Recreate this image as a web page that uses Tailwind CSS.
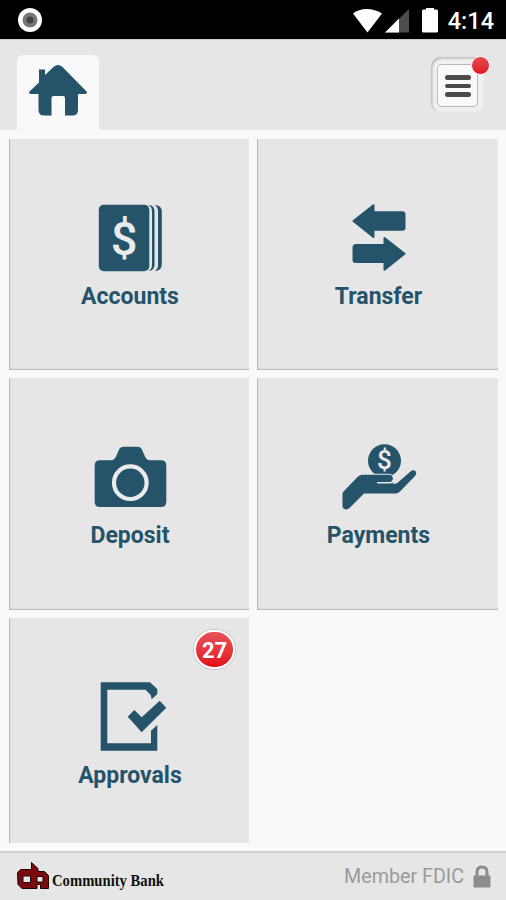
<!DOCTYPE html>
<html lang="en">
<head>
    <meta charset="UTF-8">
    <meta name="viewport" content="width=device-width, initial-scale=1.0">
    <title>Community Bank</title>
    <script src="https://cdn.jsdelivr.net/npm/@tailwindcss/browser@4"></script>
</head>
<body class="w-[506px] h-[900px] overflow-hidden flex flex-col bg-[#f9f9f9] font-['Roboto',sans-serif]">
    <!-- Status bar -->
    <div class="h-[39px] shrink-0 bg-black flex items-center justify-between pl-[17px] pr-3">
        <svg class="w-[26px] h-[26px]" viewBox="0 0 26 26">
            <circle cx="13" cy="13" r="12" fill="#fff" />
            <circle cx="13" cy="13" r="7.5" fill="#777" />
            <circle cx="13" cy="13" r="3.5" fill="#444" />
        </svg>
        <div class="flex items-center">
            <svg class="w-[88px] h-[26px]" viewBox="0 0 88 26">
                <path d="M1 6.500C8 .5 21 .5 30 6.500L15.500 25.500Z" fill="#fff" />
                <path d="M33 25.500L57 2V25.500Z" fill="#4d4d4d" />
                <path d="M33 25.500L47 11.500V25.500Z" fill="#fff" />
                <path d="M70 4Q70 2.500 71.500 2.500H74V1H82V2.500H84.500Q86 2.500 86 4V24Q86 25.500 84.500 25.500H71.500Q70 25.500 70 24Z" fill="#fff" />
            </svg>
            <span class="ml-[8px] mt-[3px] text-white font-medium text-[23.500px] leading-6">4:14</span>
        </div>
    </div>

    <!-- Header -->
    <header class="h-[91px] shrink-0 border-t border-[#ccc] bg-[#e6e6e6] flex justify-between items-start pl-[17px] pr-[21px]">
        <div class="w-[82px] h-[75px] mt-[15px] rounded-t-md bg-[#f9f9f9] flex justify-center">
            <svg class="w-[60px] h-[54px] mt-[9px]" viewBox="0 0 60 54" fill="#25536a">
                <path d="M11 5.500H17V11L26 2.500Q30 -.5 34 2.500L58.500 27.500Q60 29.500 57 30H50V46Q50 51.500 44.500 51.500H37V34Q37 32 35 32H25.500Q23.500 32 23.500 34V51.500H16Q10.500 51.500 10.500 46V30H3Q0 29.500 1.500 27.500L11 18.500Z" />
            </svg>
        </div>
        <div class="relative mt-[17px] w-[54px] h-[56px] rounded-[10px] bg-[#f0f0f0] shadow-[inset_1px_1px_3px_#aaa] p-[7px] pl-[6px]">
            <div class="w-[41px] h-[43px] rounded bg-[#f9f9f9] border border-[#bbb] flex flex-col items-center justify-center gap-1 pt-px">
                <div class="w-[26px] h-[4.500px] rounded-full bg-[#4a4a4a]"></div>
                <div class="w-[26px] h-[4.500px] rounded-full bg-[#4a4a4a]"></div>
                <div class="w-[26px] h-[4.500px] rounded-full bg-[#4a4a4a]"></div>
            </div>
            <div class="absolute -top-px -right-[5px] w-[19px] h-[19px] rounded-full border border-[#f5f5f5] bg-linear-to-b from-[#ea4650] to-[#e01524]"></div>
        </div>
    </header>

    <!-- Menu tiles -->
    <main class="h-[721px] shrink-0 overflow-hidden pt-[9px] pl-[9px] pb-2">
        <div class="h-[704px] overflow-hidden grid grid-cols-[240px_241px] grid-rows-[231px_232px_225px] gap-2 text-[#25536a] text-[23px] font-bold leading-7">
            <a class="bg-[#e6e6e6] shadow-[inset_1px_-1px_1px_#b4b4b4] pt-[57px] flex flex-col items-center">
                <svg class="w-20 h-20" viewBox="0 0 80 80" fill="#25536a">
                    <rect x="9.800" y="8.700" width="50.500" height="66.500" rx="5" />
                    <path d="M59.500 8.900Q65.500 9.500 65.500 15V69Q65.500 74.500 59.500 75Q63 73 63 69V15Q63 11 59.500 8.900Z" />
                    <path d="M65.500 8.900Q72.800 9.500 72.800 15V69Q72.800 74.500 65.500 75Q69 73 69 69V15Q69 11 65.500 8.900Z" />
                    <text x="35" y="59" text-anchor="middle" font-size="47" font-weight="500" fill="#ebebeb">$</text>
                </svg>
                <span class="mt-[7px] pl-[2px]">Accounts</span>
            </a>
            <a class="bg-[#e6e6e6] shadow-[inset_1px_-1px_1px_#b4b4b4] pt-[57px] flex flex-col items-center">
                <svg class="w-20 h-20" viewBox="0 0 80 80" fill="#25536a" stroke="#25536a" stroke-width="2" stroke-linejoin="round">
                    <path d="M15.500 25L35.500 9.300V16.300H64Q66.500 16.300 66.500 18.500V31.500Q66.500 33.700 64 33.700H35.500V41Z" />
                    <path d="M66.500 57.700L46.500 42V49H18Q15.500 49 15.500 51.500V63.700Q15.500 66 18 66H46.500V73.700Z" />
                </svg>
                <span class="mt-[7px] pl-[2px]">Transfer</span>
            </a>
            <a class="bg-[#e6e6e6] shadow-[inset_1px_-1px_1px_#b4b4b4] pt-[57px] flex flex-col items-center">
                <svg class="w-20 h-20" viewBox="0 0 80 80" fill="#25536a">
                    <path d="M11 25.300H22Q25.500 25 27 21.500L30.300 14Q31.500 11.700 35 11.700H48.500Q51.500 11.700 52.700 14L56 21.500Q57.500 25 61 25.300H72Q77.300 25.300 77.300 30.500V67Q77.300 72 72 72H11Q5.700 72 5.700 67V30.500Q5.700 25.300 11 25.300Z" />
                    <circle cx="41.300" cy="47.700" r="16.300" fill="none" stroke="#ebebeb" stroke-width="4.200" />
                </svg>
                <span class="mt-[7px] pl-[2px]">Deposit</span>
            </a>
            <a class="bg-[#e6e6e6] shadow-[inset_1px_-1px_1px_#b4b4b4] pt-[57px] flex flex-col items-center">
                <svg class="w-20 h-20" viewBox="0 0 80 80" fill="#25536a">
                    <circle cx="46.500" cy="25.700" r="16.500" />
                    <text x="46.500" y="33.500" text-anchor="middle" font-size="26" font-weight="500" fill="#ebebeb">$</text>
                    <path d="M4.500 59Q4.500 57.500 6 56L19.500 42Q21.500 40 24 39.700H51Q54.800 40 54.800 43.500V48.800H57Q59 48.800 60.500 47L73 36Q76 34.300 77.800 36.500Q78.800 39 77 41L62 56.500Q60 58.500 57.500 58.500H26L11.500 73Q8.500 75.500 5.500 73.500Q4.500 72.500 4.500 71Z" stroke="#e6e6e6" stroke-width="2" paint-order="stroke" />
                    <path d="M39 47.800H52.500Q54.500 47.500 55 45" fill="none" stroke="#e6e6e6" stroke-width="1.400" />
                </svg>
                <span class="mt-[7px] pl-[2px]">Payments</span>
            </a>
            <a class="relative bg-[#e6e6e6] shadow-[inset_2px_0_1px_-1px_#b4b4b4] pt-[57px] flex flex-col items-center">
                <svg class="w-20 h-20" viewBox="0 0 80 80" fill="#25536a">
                    <path d="M11.700 7.300H61L68.300 14V19L62.700 24.300L61.700 20L56.500 14.700H18.300V68.300H62V55.700L68.300 50V75.700H11.700Z" />
                    <path d="M38.700 41.700L45.300 35L52.700 42.300L70.700 25.700L77.300 32.700L52.700 57.300Z" />
                </svg>
                <span class="mt-[7px] pl-[2px]">Approvals</span>
                <div class="absolute top-[12px] right-[14px] w-[41px] h-[39px] rounded-full border-2 border-white ring-1 ring-[#c8c8c8] bg-linear-to-b from-[#e8505b] to-[#e30613] text-white text-[22px] pt-[2px] flex items-center justify-center">27</div>
            </a>
        </div>
    </main>

    <!-- Footer -->
    <footer class="h-[49px] shrink-0 border-t-2 border-[#cfcfcf] bg-[#e6e6e6] flex items-center justify-between pl-4 pr-[15px]">
        <svg class="w-40 h-9 overflow-visible" viewBox="0 0 160 36">
            <path d="M1.500 13.500L4.500 10.500H15.500V3.500L22 9.500V12.500H28.500L32.500 16.500V29.500H24.500V25.500H21V29.500H6L2 25.500ZM7 17H14.500V23.500H7ZM21 17.500H27V23H21Z" fill="#7a0c10" fill-rule="evenodd" stroke="#1c0506" stroke-width="1" stroke-linejoin="round" />
            <text x="36" y="27" textLength="112" lengthAdjust="spacingAndGlyphs" font-size="17" font-weight="700" fill="#111" class="font-['Liberation_Serif',serif]">Community Bank</text>
        </svg>
        <div class="flex items-center">
            <span class="text-[#9a9a9a] text-[19.700px] leading-6">Member FDIC</span>
            <svg class="w-[18px] h-6 ml-[9px]" viewBox="0 0 18 24">
                <path d="M4 11V7Q4 2 9 2T14 7V11" fill="none" stroke="#8c8c8c" stroke-width="3" />
                <rect x=".5" y="10.500" width="17" height="12" rx="1" fill="#8c8c8c" />
            </svg>
        </div>
    </footer>
</body>
</html>
